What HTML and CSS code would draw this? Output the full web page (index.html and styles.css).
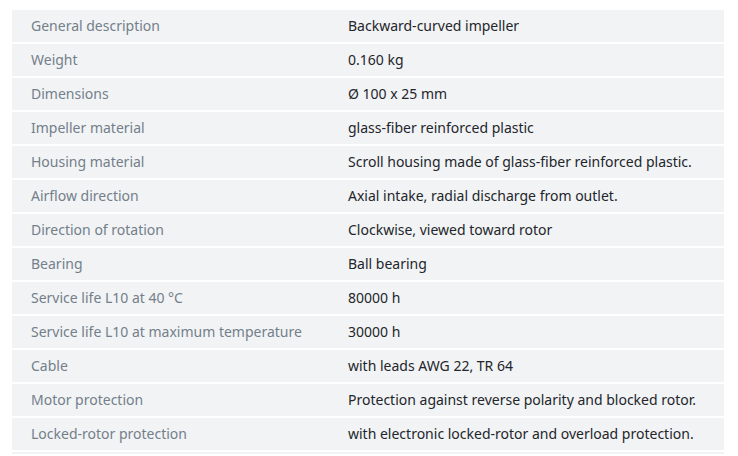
FILE: index.html
```html
<!DOCTYPE html>
<html>
<head>
<meta charset="utf-8">
<link rel="stylesheet" href="styles.css">
</head>
<body>
<table class="specs">
  <tbody>
    <tr><th>General description</th><td>Backward-curved impeller</td></tr>
    <tr><th>Weight</th><td>0.160 kg</td></tr>
    <tr><th>Dimensions</th><td>Ø 100 x 25 mm</td></tr>
    <tr><th>Impeller material</th><td>glass-fiber reinforced plastic</td></tr>
    <tr><th>Housing material</th><td>Scroll housing made of glass-fiber reinforced plastic.</td></tr>
    <tr><th>Airflow direction</th><td>Axial intake, radial discharge from outlet.</td></tr>
    <tr><th>Direction of rotation</th><td>Clockwise, viewed toward rotor</td></tr>
    <tr><th>Bearing</th><td>Ball bearing</td></tr>
    <tr><th>Service life L10 at 40 °C</th><td>80000 h</td></tr>
    <tr><th>Service life L10 at maximum temperature</th><td>30000 h</td></tr>
    <tr><th>Cable</th><td>with leads AWG 22, TR 64</td></tr>
    <tr><th>Motor protection</th><td>Protection against reverse polarity and blocked rotor.</td></tr>
    <tr><th>Locked-rotor protection</th><td>with electronic locked-rotor and overload protection.</td></tr>
    <tr class="partial"><th></th><td></td></tr>
  </tbody>
</table>
</body>
</html>
```
FILE: styles.css
```css
html, body {
  margin: 0;
  background: #ffffff;
}
html {
  height: 456px;
  overflow: hidden;
}
body {
  padding: 10px 14px 0 12px;
  font-family: "Noto Sans", "Open Sans", sans-serif;
  font-size: 14px;
  height: 456px;
  overflow: hidden;
  box-sizing: border-box;
}
.specs {
  width: 712px;
  border-collapse: collapse;
  table-layout: fixed;
}
.specs tr {
  background: #f2f3f5;
  border-bottom: 2px solid #ffffff;
}
.specs th,
.specs td {
  height: 30px;
  padding: 0 0 2px 19px;
  text-align: left;
  vertical-align: middle;
  font-weight: normal;
  white-space: nowrap;
}
.specs th {
  width: 298px;
  color: #737f8a;
}
.specs td {
  color: #23262a;
}
.specs .partial th,
.specs .partial td {
  height: 2px;
  padding: 0;
}
```
